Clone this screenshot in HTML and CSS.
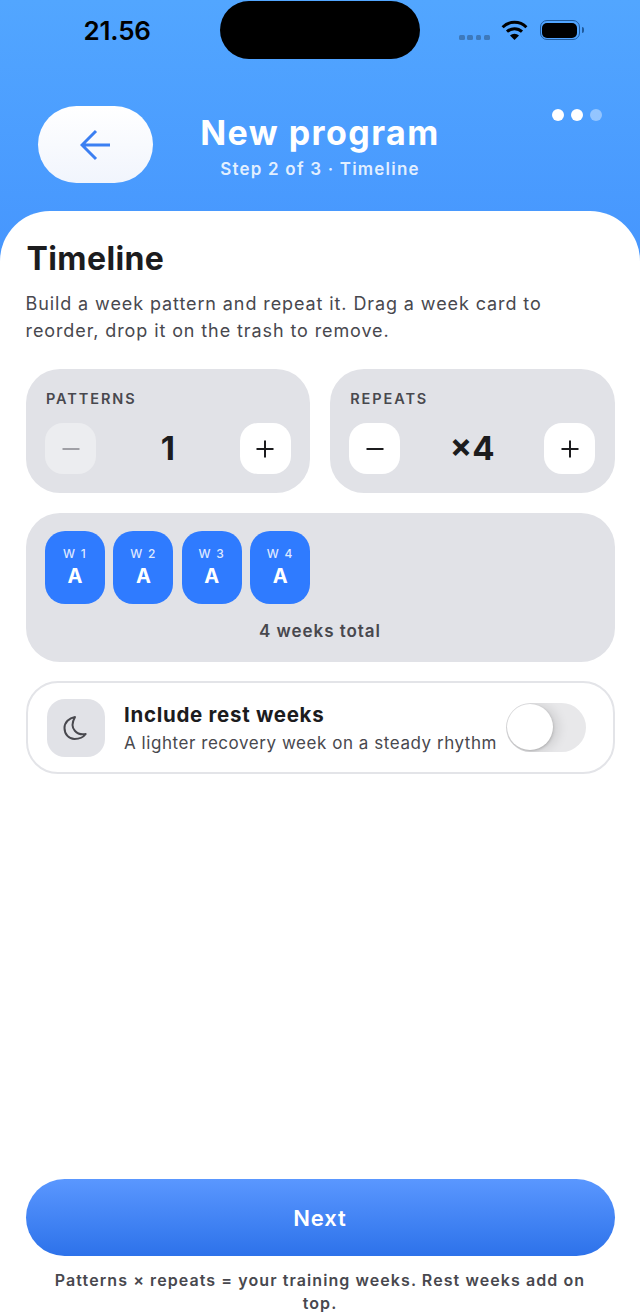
FILE: index.html
```html
<!DOCTYPE html>
<html lang="en">
<head>
<meta charset="utf-8">
<title>New program</title>
<link rel="stylesheet" href="styles.css">
</head>
<body>
<div class="app">
  <header class="hero">
    <div class="status">
      <div class="status-left"><span class="time">21.56</span></div>
      <div class="island"></div>
      <div class="status-right">
        <div class="signal"><i></i><i></i><i></i><i></i></div>
        <svg class="wifi" width="27" height="21" viewBox="0 0 27 21"><path d="M1.600 7.200A17 17 0 0 1 25.400 7.200" fill="none" stroke="#000" stroke-width="3"/><path d="M6 11.600A11 11 0 0 1 21 11.600" fill="none" stroke="#000" stroke-width="3"/><path d="M13.500 20 9 15.400A6.600 6.600 0 0 1 18 15.400Z" fill="#000"/></svg>
        <div class="battery"><div class="battery-fill"></div></div>
        <div class="battery-cap"></div>
      </div>
    </div>
    <div class="nav">
      <button class="back" aria-label="Back">
        <svg width="32" height="32" viewBox="0 0 32 32"><path d="M30 16H2M16 2 2 16 16 30" fill="none" stroke="#3b7ff2" stroke-width="3"/></svg>
      </button>
      <div class="heading">
        <div class="title">New program</div>
        <div class="subtitle">Step 2 of 3 · Timeline</div>
      </div>
    </div>
    <div class="steps"><i class="on"></i><i class="on"></i><i></i></div>
  </header>
  <main class="sheet">
    <div class="content">
      <h1>Timeline</h1>
      <p class="lead">Build a week pattern and repeat it. Drag a week card to reorder, drop it on the trash to remove.</p>
      <div class="counters">
        <section class="counter">
          <div class="label">PATTERNS</div>
          <div class="stepper">
            <button class="step disabled">
              <svg width="20" height="20" viewBox="0 0 20 20"><path d="M1.500 10H18.500" stroke="#a0a0a6" stroke-width="2"/></svg>
            </button>
            <span class="value">1</span>
            <button class="step">
              <svg width="20" height="20" viewBox="0 0 20 20"><path d="M1.500 10H18.500M10 1.500V18.500" stroke="#1c1c1e" stroke-width="2"/></svg>
            </button>
          </div>
        </section>
        <section class="counter">
          <div class="label">REPEATS</div>
          <div class="stepper">
            <button class="step">
              <svg width="20" height="20" viewBox="0 0 20 20"><path d="M1.500 10H18.500" stroke="#1c1c1e" stroke-width="2"/></svg>
            </button>
            <span class="value">×4</span>
            <button class="step">
              <svg width="20" height="20" viewBox="0 0 20 20"><path d="M1.500 10H18.500M10 1.500V18.500" stroke="#1c1c1e" stroke-width="2"/></svg>
            </button>
          </div>
        </section>
      </div>
      <section class="weeks">
        <div class="tiles">
          <div class="tile"><span class="tile-w">W 1</span><span class="tile-a">A</span></div>
          <div class="tile"><span class="tile-w">W 2</span><span class="tile-a">A</span></div>
          <div class="tile"><span class="tile-w">W 3</span><span class="tile-a">A</span></div>
          <div class="tile"><span class="tile-w">W 4</span><span class="tile-a">A</span></div>
        </div>
        <div class="total">4 weeks total</div>
      </section>
      <section class="rest">
        <div class="rest-icon">
          <svg width="26" height="26" viewBox="0 0 26 26"><path d="M12 2C6 3 1.500 7.500 1.500 13C1.500 19.500 6 24 11.500 24C16 24 20.500 22 22.700 19C15 20.500 5 14.500 12 2Z" fill="none" stroke="#48484e" stroke-width="2" stroke-linejoin="round"/></svg>
        </div>
        <div class="rest-text">
          <div class="rest-title">Include rest weeks</div>
          <div class="rest-sub">A lighter recovery week on a steady rhythm</div>
        </div>
        <div class="toggle"><div class="knob"></div></div>
      </section>
    </div>
    <footer class="actions">
      <button class="next">Next</button>
      <p class="note">Patterns × repeats = your training weeks. Rest weeks add on top.</p>
    </footer>
  </main>
</div>
</body>
</html>
```
FILE: styles.css
```css
* { box-sizing: border-box; }
html, body { margin: 0; padding: 0; }
body { font-family: Inter, "Noto Sans", sans-serif; background: #fff; }
button { font-family: inherit; border: 0; padding: 0; }

.app {
  position: relative;
  width: 640px;
  height: 1312px;
  overflow: hidden;
  display: flex;
  flex-direction: column;
  background: linear-gradient(180deg, #52a6ff 0%, #4696fe 260px);
}

.hero { position: relative; height: 211px; flex: none; }
.status {
  display: grid;
  grid-template-columns: 1fr 200px 1fr;
  padding-top: 1px;
  height: 59px;
}
.status-left { display: flex; justify-content: flex-start; padding: 14px 0 0 83.500px; }
.time { font-size: 26px; font-weight: 600; line-height: 31px; color: #000; letter-spacing: -0.2px; }
.island { width: 200px; height: 58px; background: #000; border-radius: 29px; }
.status-right { display: flex; align-items: flex-start; padding-left: 39px; }
.signal { display: flex; gap: 2.500px; margin-top: 34px; }
.signal i { width: 5.800px; height: 5px; background: #3d79bb; border-radius: 1.500px; }
.wifi { margin: 19px 0 0 11px; }
.battery {
  width: 40px;
  height: 20px;
  margin: 19px 0 0 12px;
  padding: 1.500px;
  border: 1.500px solid #1f5a9c;
  border-radius: 7px;
}
.battery-fill { width: 100%; height: 100%; background: #000; border-radius: 5px; }
.battery-cap { width: 2px; height: 6px; margin: 26px 0 0 2px; background: #1f5a9c; border-radius: 0 2px 2px 0; }

.nav {
  display: grid;
  grid-template-columns: 1fr auto 1fr;
  align-items: center;
  padding: 47px 38px 0;
}
.back {
  width: 115px;
  height: 77px;
  border-radius: 38.500px;
  background: linear-gradient(180deg, #ffffff 0%, #f1f5fd 100%);
  display: flex;
  align-items: center;
  justify-content: center;
}
.heading { text-align: center; color: #fff; padding-top: 4px; }
.title { font-size: 34px; font-weight: 700; line-height: 40px; letter-spacing: 1.45px; }
.subtitle { font-size: 17px; font-weight: 600; line-height: 22px; letter-spacing: 1.2px; margin-top: 5px; color: rgba(255,255,255,.85); }
.steps { position: absolute; top: 109px; left: 552px; display: flex; gap: 7px; }
.steps i { width: 12px; height: 12px; border-radius: 50%; background: rgba(255,255,255,.4); }
.steps i.on { background: #fff; }

.sheet {
  flex: 1;
  min-height: 0;
  background: #fff;
  border-radius: 50px 50px 0 0;
  display: flex;
  flex-direction: column;
}
.content { flex: 1; padding: 28px 25.500px 0; }
h1 { margin: 0 0 0 1px; font-size: 32px; font-weight: 700; line-height: 40px; color: #1c1c1e; letter-spacing: 0.4px; }
.lead { margin: 11px 0 0; max-width: 560px; font-size: 18px; line-height: 27px; color: #48484e; letter-spacing: 0.9px; }

.counters { display: grid; grid-template-columns: 1fr 1fr; gap: 19.500px; margin-top: 25px; }
.counter { height: 124px; background: #e1e2e7; border-radius: 34px; padding: 21px 19.500px; }
.label { margin-left: 1px; font-size: 14.500px; font-weight: 600; line-height: 18px; letter-spacing: 1.9px; color: #48484e; }
.stepper { display: flex; align-items: center; justify-content: space-between; margin-top: 15px; }
.step {
  width: 51px;
  height: 51px;
  border-radius: 18px;
  background: #fff;
  display: flex;
  align-items: center;
  justify-content: center;
}
.step.disabled { background: #ecedf0; }
.value { font-size: 33px; font-weight: 700; line-height: 51px; color: #1c1c1e; }

.weeks { height: 149px; margin-top: 19.500px; padding: 18.500px 19.500px 0; background: #e1e2e7; border-radius: 34px; }
.tiles { display: flex; gap: 8.400px; }
.tile {
  width: 60px;
  height: 73px;
  border-radius: 20px;
  background: #2f7bff;
  color: #fff;
  display: flex;
  flex-direction: column;
  align-items: center;
  padding-top: 14.500px;
}
.tile-w { font-size: 12px; font-weight: 500; line-height: 16px; letter-spacing: 1.2px; color: rgba(255,255,255,.85); }
.tile-a { font-size: 20px; font-weight: 700; line-height: 24px; margin-top: 2px; }
.total { margin-top: 15.500px; text-align: center; font-size: 17px; font-weight: 600; line-height: 22px; letter-spacing: 0.95px; color: #48484e; }

.rest {
  display: flex;
  align-items: center;
  height: 92.500px;
  margin-top: 19.500px;
  padding: 2px 27px 0 19.500px;
  border: 2px solid #e3e4e8;
  border-radius: 32px;
}
.rest-icon {
  width: 57.500px;
  height: 58px;
  flex: none;
  border-radius: 18px;
  background: #e1e2e7;
  display: flex;
  align-items: center;
  justify-content: center;
}
.rest-text { flex: 1; margin-left: 19.500px; min-width: 0; white-space: nowrap; }
.rest-title { font-size: 20.500px; font-weight: 700; line-height: 26px; color: #1c1c1e; letter-spacing: 0.7px; }
.rest-sub { font-size: 17px; line-height: 22px; margin-top: 4px; color: #48484e; letter-spacing: 0.55px; }
.toggle {
  position: relative;
  width: 80px;
  height: 49px;
  flex: none;
  margin-top: -2px;
  border-radius: 25px;
  background: #e8e8ea;
  overflow: hidden;
}
.knob {
  position: absolute;
  left: 1px;
  top: 1.500px;
  width: 46px;
  height: 46px;
  border-radius: 50%;
  background: #fff;
  box-shadow: 0 1px 3px rgba(0,0,0,.22), 5px 1px 12px rgba(0,0,0,.12);
}

.actions { padding: 0 25.500px; }
.next {
  display: block;
  width: 100%;
  height: 77px;
  border-radius: 38.500px;
  background: linear-gradient(180deg, #5a97ff 0%, #2d72ea 100%);
  color: #fff;
  font-size: 22px;
  font-weight: 600;
  letter-spacing: 0.9px;
}
.note { margin: 12.500px 0 0; height: 43.500px; padding: 0 20px; text-align: center; font-size: 16px; font-weight: 600; line-height: 23px; letter-spacing: 1.08px; color: #48484e; }
```
